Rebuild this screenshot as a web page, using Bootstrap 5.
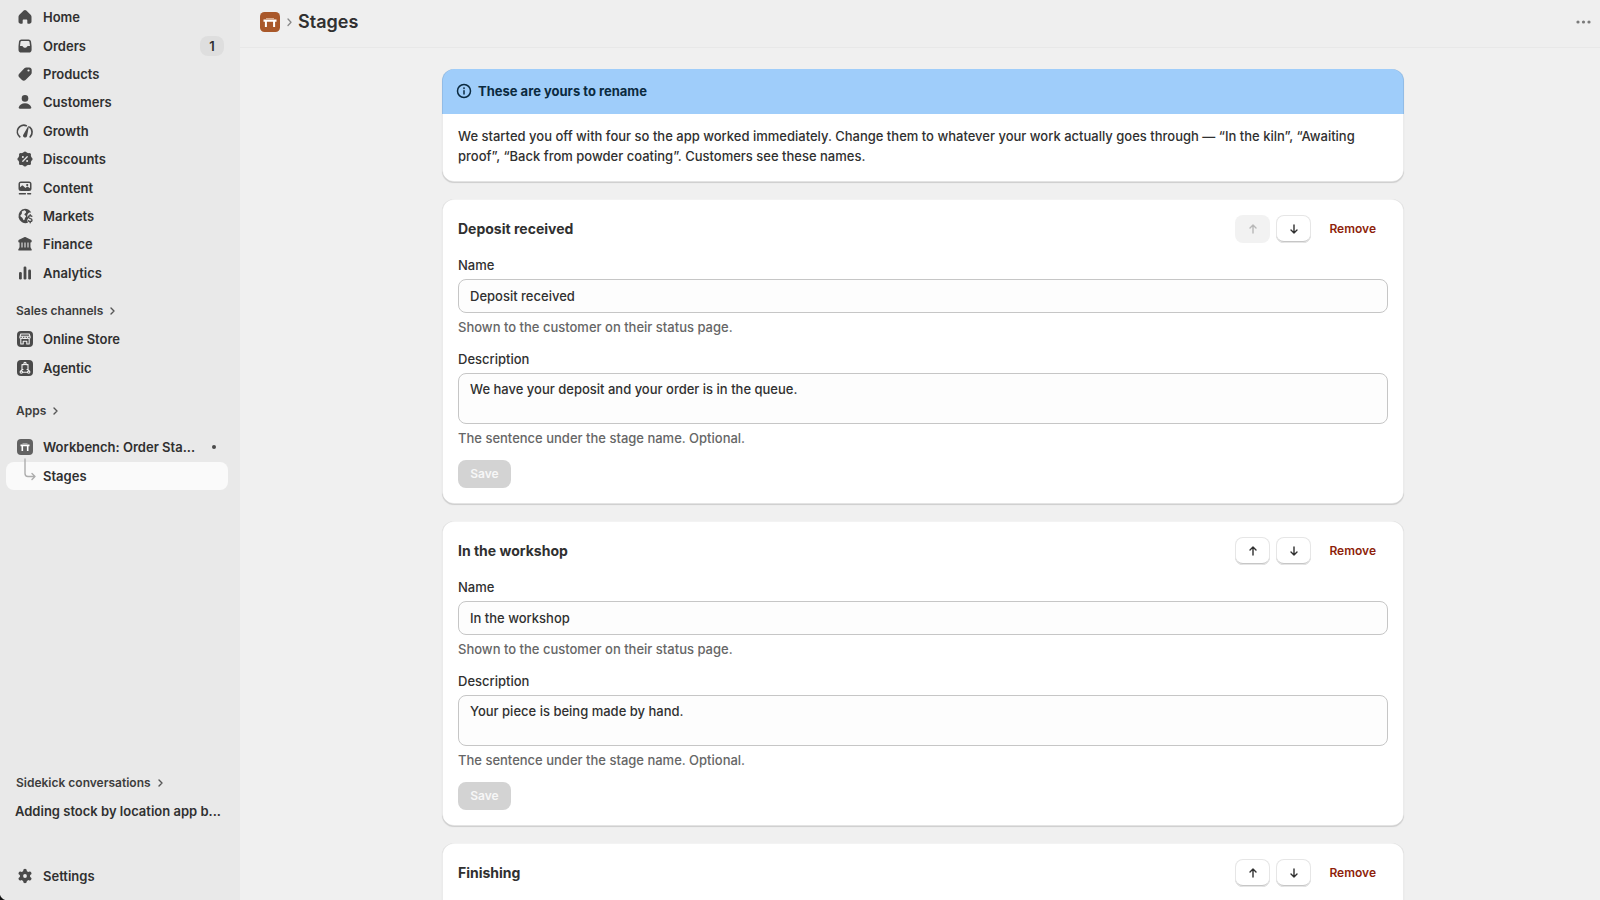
<!DOCTYPE html>
<html lang="en">
<head>
<meta charset="utf-8">
<meta name="viewport" content="width=device-width, initial-scale=1">
<title>Stages</title>
<link href="https://cdn.jsdelivr.net/npm/bootstrap@5.3.0/dist/css/bootstrap.min.css" rel="stylesheet">
<style>
  body { font-family: Inter, "Liberation Sans", sans-serif; font-size: 13px; font-weight: 450; line-height: 20px; color: #303030; background: #f0f0f0; }
  a { color: inherit; text-decoration: none; }
  .app-side { width: 240px; background: #e9e9e9; font-weight: 600; padding: 3px 12px 10px 6px; }
  .side-list { display: grid; grid-auto-rows: 1fr; }
  .side-main { min-height: 284px; }
  .side-pair { min-height: 57px; }
  .side-item { display: flex; align-items: center; gap: 8px; padding: 0 4px 0 9px; min-height: 28px; border-radius: 8px; }
  .side-item svg { width: 20px; height: 20px; flex: none; fill: #4a4a4a; }
  .side-item.current { background: #fafafa; }
  .side-head { display: flex; align-items: center; gap: 6px; padding-left: 10px; min-height: 28px; font-size: 12px; color: #3d3d3d; }
  .side-channels { margin-top: 10px; }
  .side-apps { margin-top: 15px; }
  .side-count { width: 24px; height: 20px; border-radius: 8px; background: #dedede; text-align: center; }
  .side-dot { width: 4px; height: 4px; border-radius: 50%; background: #4a4a4a; margin-right: 8px; }
  .side-branch { overflow: visible; }
  .side-foot { margin-top: 37px; }
  .window-corner { left: 0; bottom: 0; width: 8px; height: 8px; background: radial-gradient(circle at 100% 0, transparent 8px, #111 9px); }
  .app-bar { height: 48px; padding: 0 7px 4px 20px; border-bottom: 1px solid #e8e8e8; background: #efefef; }
  .app-bar h1 { font-size: 18px; line-height: 24px; font-weight: 600; }
  .app-logo { width: 20px; height: 20px; }
  .page-scroll { overflow-y: auto; scrollbar-width: none; padding: 21px 0 16px 6px; }
  .page-scroll::-webkit-scrollbar { display: none; }
  .page-col { max-width: 962px; gap: 17px; }
  .panel { background: #fff; border-radius: 12px; box-shadow: 0 1px 1px #00000026, inset 1px 0 0 #00000014, inset -1px 0 0 #00000014, inset 0 -1px 0 #0000001c, inset 0 1px 0 #0000000c; }
  .notice-head { height: 45px; padding: 0 14px 2px; gap: 6px; background: #9fcdfa; color: #0b2a40; border-radius: 12px 12px 0 0; box-shadow: inset 1px 0 0 #00000014, inset -1px 0 0 #00000014; }
  .notice-head h2 { font-size: 13px; line-height: 20px; font-weight: 700; }
  .notice-text { padding: 12px 16px 16px; }
  .stage { padding: 16px; gap: 12px; }
  .stage h2 { font-size: 14px; line-height: 20px; font-weight: 650; }
  .stage-tools { gap: 6px; }
  .field label { display: block; margin-bottom: 4px; font-weight: 500; }
  .field .form-control { display: block; height: 34px; padding: 6px 11px; font-size: 13px; font-weight: 450; line-height: 20px; color: #303030; background: #fdfdfd; border: 1px solid #c6c6c6; border-radius: 8px; resize: none; }
  .field textarea.form-control { height: 51px; min-height: 51px; padding: 5px 11px; overflow: hidden; }
  .field .help { margin-top: 4px; color: #666; }
  .move { width: 35px; height: 28px; padding: 0; border: 0; border-radius: 8px; background: #fff; box-shadow: inset 0 0 0 1px #e6e6e6, inset 0 -2px 0 #c6c6c6; display: flex; align-items: center; justify-content: center; }
  .move svg { width: 12px; height: 12px; fill: none; stroke: #303030; stroke-width: 1.4; stroke-linecap: round; stroke-linejoin: round; }
  .move:disabled { background: #f2f2f2; box-shadow: none; border: 0; opacity: 1; }
  .move:disabled svg { stroke: #b8b8b8; }
  .remove { height: 28px; padding: 0 12px; border: 0; font-size: 12px; line-height: 20px; font-weight: 600; color: #8e1f0b; }
  .save { width: 53px; height: 28px; padding: 0; border: 0; border-radius: 8px; font-size: 12px; line-height: 20px; font-weight: 600; }
  .save:disabled { background: #d3d3d3; color: #f7f7f7; opacity: 1; }
</style>
</head>
<body>
<svg width="0" height="0" class="position-absolute" aria-hidden="true">
  <symbol id="up" viewBox="0 0 12 12"><path d="M6 10V2M3 5 6 2 9 5"/></symbol>
  <symbol id="down" viewBox="0 0 12 12"><path d="M6 2V10M3 7 6 10 9 7"/></symbol>
  <symbol id="chev" viewBox="0 0 8 12"><path d="M2 3 5 6 2 9" fill="none" stroke="#555" stroke-width="1.400" stroke-linecap="round" stroke-linejoin="round"/></symbol>
</svg>
<div class="d-flex vh-100 overflow-hidden">
  <aside class="app-side d-flex flex-column flex-shrink-0">
    <nav class="side-list side-main" aria-label="Main">
      <a class="side-item" href="#"><svg viewBox="0 0 20 20"><path d="M8.700 3.600a1.900 1.900 0 0 1 2.600 0l4.300 4.100c.6.600.9 1.300.9 2.100v4.700c0 1.300-.9 2.200-2.200 2.200h-1c-.6 0-1-.4-1-1v-2.200c0-.6-.4-1-1-1H8.700c-.6 0-1 .4-1 1v2.200c0 .6-.4 1-1 1h-1c-1.300 0-2.200-.9-2.200-2.200V9.800c0-.8.3-1.500.9-2.100z"/></svg><span>Home</span></a>
      <a class="side-item" href="#"><svg viewBox="0 0 20 20"><path fill-rule="evenodd" d="M6.500 3.500h7c1.300 0 2.200.8 2.500 2l.6 4.500v3.700a2.800 2.800 0 0 1-2.800 2.800H6.300a2.800 2.800 0 0 1-2.800-2.800V10L4 5.500c.3-1.200 1.200-2 2.500-2zM6.600 5c-.6 0-1 .4-1.100 1L5 10h2c.5 0 .9.300 1.100.8.300.7.800 1 1.500 1h.8c.7 0 1.200-.3 1.500-1 .2-.5.600-.8 1.100-.8h2l-.5-4c-.1-.6-.5-1-1.100-1z"/></svg><span>Orders</span><span class="side-count ms-auto">1</span></a>
      <a class="side-item" href="#"><svg viewBox="0 0 20 20"><path fill-rule="evenodd" d="M11.300 3.400h3c1.400 0 2.400 1 2.400 2.400v3c0 .8-.3 1.500-.9 2l-5.300 5.200c-1 1-2.500 1-3.500 0l-2.800-2.800c-1-1-1-2.500 0-3.500L9.400 4.300c.5-.6 1.200-.9 1.900-.9zm2.200 4.200a1.100 1.100 0 1 0 0-2.200 1.100 1.100 0 0 0 0 2.200z"/></svg><span>Products</span></a>
      <a class="side-item" href="#"><svg viewBox="0 0 20 20"><circle cx="10" cy="6.400" r="3.300"/><path d="M3.700 15.500c.6-2.700 3.200-4.300 6.300-4.300s5.700 1.600 6.300 4.300c.2.700-.4 1.200-1.100 1.200H4.800c-.7 0-1.300-.5-1.100-1.200z"/></svg><span>Customers</span></a>
      <a class="side-item" href="#"><svg viewBox="0 0 20 20"><path d="M4.800 15.800A6.500 6.500 0 0 1 11.300 4.700M14.700 6.200a6.500 6.500 0 0 1 .5 9.600" fill="none" stroke="#4a4a4a" stroke-width="1.700" stroke-linecap="round"/><path d="M8 14.200 13 5.400c.3-.5.900-.3.8.3L12 15.300a2.100 2.100 0 0 1-4-1.100z"/></svg><span>Growth</span></a>
      <a class="side-item" href="#"><svg viewBox="0 0 20 20"><path d="M10 3.700 14.500 5.500 16.300 10 14.500 14.500 10 16.300 5.500 14.500 3.700 10 5.500 5.500z" stroke="#4a4a4a" stroke-width="1.600" stroke-linejoin="round"/><g><circle cx="10" cy="4" r="1.600"/><circle cx="10" cy="16" r="1.600"/><circle cx="4" cy="10" r="1.600"/><circle cx="16" cy="10" r="1.600"/><circle cx="5.600" cy="5.600" r="1.600"/><circle cx="14.400" cy="5.600" r="1.600"/><circle cx="5.600" cy="14.400" r="1.600"/><circle cx="14.400" cy="14.400" r="1.600"/></g><path d="m7.800 12.200 4.400-4.400" stroke="#e9e9e9" stroke-width="1.300" stroke-linecap="round"/><circle cx="7.900" cy="8" r="1" fill="#e9e9e9"/><circle cx="12.100" cy="12" r="1" fill="#e9e9e9"/></svg><span>Discounts</span></a>
      <a class="side-item" href="#"><svg viewBox="0 0 20 20"><path fill-rule="evenodd" d="M6 3.500h8A2.500 2.500 0 0 1 16.500 6v4.500A2.500 2.500 0 0 1 14 13H6a2.500 2.500 0 0 1-2.500-2.500V6A2.500 2.500 0 0 1 6 3.500zM6 5c-.6 0-1 .4-1 1v3.300l1.500-1.400c.6-.5 1.300-.5 1.800 0l2.200 2 1.100-.9c.5-.4 1.100-.4 1.600 0l1.800 1.300V6c0-.6-.4-1-1-1zm6.200 3.200a1.100 1.100 0 1 0 0-2.200 1.100 1.100 0 0 0 0 2.200z"/><path d="M4.400 15.800h6M12.700 15.800h2.900" stroke="#4a4a4a" stroke-width="1.400" stroke-linecap="round"/></svg><span>Content</span></a>
      <a class="side-item" href="#"><svg viewBox="0 0 20 20"><path fill-rule="evenodd" d="M10 2.800c2.700 0 5 1.500 6.200 3.700-1.500-.4-3 .3-3.600 1.700-.6 1.200-.3 2.600.7 3.500l-.5 1.600c-.7.500-.8 1.800-.1 2.400l.2 1.100A7.200 7.200 0 1 1 10 2.800zM9.800 4.300c-1 .1-2.200.6-3 1.200.1 1.200.3 1.700-.2 2.600-.4.700-1.300 1-1.200 2 .1 1 1.200 1.100 2 1.800.8.700.7 2.300 1.600 2.300.9-.1.600-1.900 1.300-2.700.4-.5.900-.8.700-1.500-.2-.8-1.500-.7-1.600-1.600-.1-.8 1.300-1 1.700-1.900.3-.8-.7-1.500-1.300-2.200z"/><path d="M16.800 10.300c-.6-.6-1.300-.7-2-.6-1.700.2-1.700 2.300 0 2.700l.7.200c2 .4 1.900 2.700.1 2.900-.9.100-1.700-.2-2.200-.8M15.200 8.700v1M15.200 15.500v1.200" fill="none" stroke="#4a4a4a" stroke-width="1.400" stroke-linecap="round"/></svg><span>Markets</span></a>
      <a class="side-item" href="#"><svg viewBox="0 0 20 20"><path d="M9.200 3.300c.5-.3 1.100-.3 1.600 0L16 5.700c.5.300.7.700.7 1.200v.7c0 .5-.4.900-.9.900H4.200c-.5 0-.9-.4-.9-.9v-.7c0-.5.3-1 .7-1.200z"/><path d="M5.500 8v6M8.500 8v6M11.500 8v6M14.500 8v6" stroke="#4a4a4a" stroke-width="1.900"/><path d="M4.500 13.500h11l1.100 1.700c.4.700 0 1.400-.7 1.400H4.100c-.7 0-1.100-.7-.7-1.400z"/></svg><span>Finance</span></a>
      <a class="side-item" href="#"><svg viewBox="0 0 20 20"><rect x="4" y="9" width="2.800" height="7.500" rx="1.300"/><rect x="8.600" y="3.500" width="2.800" height="13" rx="1.300"/><rect x="13.200" y="6.500" width="2.800" height="10" rx="1.300"/></svg><span>Analytics</span></a>
    </nav>
    <a class="side-head side-channels" href="#">Sales channels<svg width="8" height="12"><use href="#chev"/></svg></a>
    <nav class="side-list side-pair" aria-label="Sales channels">
      <a class="side-item" href="#"><svg viewBox="0 0 20 20"><rect x="2" y="2" width="16" height="16" rx="4"/><g fill="none" stroke="#f1f1f1" stroke-width="1.100" stroke-linejoin="round"><path d="M5.800 5h8.400l1 3.200c0 1.700-2.400 1.700-2.600.2-.2 1.500-2.500 1.500-2.600 0-.1 1.500-2.400 1.500-2.600 0-.2 1.500-2.600 1.500-2.600-.2zM5.300 7.300h9.400M5.800 10v5h2.400v-2.700h3.600V15h2.400v-5"/></g></svg><span>Online Store</span></a>
      <a class="side-item" href="#"><svg viewBox="0 0 20 20"><rect x="2" y="2" width="16" height="16" rx="4"/><g fill="none" stroke="#f1f1f1" stroke-width="1.100" stroke-linecap="round" stroke-linejoin="round"><path d="M8.800 6.600H7v4.900l-1 1.600M11.200 6.600H13v4.900l1 1.600M7.600 14.300h4.800M7 11.500h1M13 11.500h-1"/><circle cx="10" cy="5.500" r="1.100"/><circle cx="6.300" cy="14.100" r="1.200"/><circle cx="13.700" cy="14.100" r="1.200"/></g></svg><span>Agentic</span></a>
    </nav>
    <a class="side-head side-apps" href="#">Apps<svg width="8" height="12"><use href="#chev"/></svg></a>
    <nav class="side-list side-pair mt-2" aria-label="Apps">
      <a class="side-item" href="#"><svg viewBox="0 0 20 20"><rect x="2" y="2" width="16" height="16" rx="4" fill="#616161"/><path d="M5.500 7.500h9v1.800h-9zM6.500 9.300h1.600V14H6.500zM11.900 9.300h1.600V14h-1.600z" fill="#fff"/><path d="M7.500 6.300h5v1.200h-5z" fill="#bbb"/></svg><span class="text-nowrap">Workbench: Order Sta...</span><span class="side-dot ms-auto"></span></a>
      <a class="side-item current" href="#" aria-current="page"><svg class="side-branch" viewBox="0 0 20 20"><path d="M10-7V7.500A3 3 0 0 0 13 10.500H20M17 7.500l3 3-3 3" fill="none" stroke="#adadad" stroke-width="1.400" stroke-linecap="round" stroke-linejoin="round"/></svg><span>Stages</span></a>
    </nav>
    <div class="mt-auto">
      <a class="side-head" href="#">Sidekick conversations<svg width="8" height="12"><use href="#chev"/></svg></a>
      <a class="side-item text-nowrap" href="#">Adding stock by location app b...</a>
    </div>
    <a class="side-item side-foot flex-shrink-0" href="#"><svg viewBox="0 0 20 20"><g stroke="#4a4a4a" stroke-width="3.600" stroke-linecap="round"><path d="M10 4.600v10.800M5.300 7.300l9.400 5.400M14.700 7.300 5.300 12.700"/></g><circle cx="10" cy="10" r="5.200"/><circle cx="10" cy="10" r="1.900" fill="#e9e9e9"/></svg><span>Settings</span></a>
  </aside>

  <div class="d-flex flex-column flex-grow-1 overflow-hidden">
    <header class="app-bar d-flex align-items-center flex-shrink-0">
      <svg class="app-logo" viewBox="0 0 20 20"><rect width="20" height="20" rx="4.500" fill="#a9582a"/><path d="M3.500 7.500h13v2.300h-13zM4.900 9.800h2V15h-2zM13.100 9.800h2V15h-2z" fill="#fff"/><path d="M6 6h8v1.500H6z" fill="#d9ab8d"/></svg>
      <svg class="mx-1" width="10" height="12" viewBox="0 0 10 12"><path d="M4 3l3 3.200L4 9.500" fill="none" stroke="#8a8a8a" stroke-width="1.300" stroke-linecap="round" stroke-linejoin="round"/></svg>
      <h1 class="m-0">Stages</h1>
      <button type="button" class="btn p-0 border-0 ms-auto d-flex" aria-label="More actions"><svg width="18" height="20" viewBox="0 0 18 20" fill="#7a7a7a"><circle cx="3" cy="10" r="1.600"/><circle cx="8.500" cy="10" r="1.600"/><circle cx="14" cy="10" r="1.600"/></svg></button>
    </header>
    <main class="page-scroll flex-grow-1">
      <div class="page-col d-flex flex-column mx-auto">
        <section class="panel">
          <div class="notice-head d-flex align-items-center"><svg width="16" height="16" viewBox="0 0 16 16" fill="none" stroke="#0b2a40" stroke-width="1.500" stroke-linecap="round"><circle cx="8" cy="8" r="6.500"/><path d="M8 7.700v3.200"/><circle cx="8" cy="5.200" r=".3"/></svg><h2 class="m-0">These are yours to rename</h2></div>
          <p class="notice-text m-0">We started you off with four so the app worked immediately. Change them to whatever your work actually goes through — “In the kiln”, “Awaiting proof”, “Back from powder coating”. Customers see these names.</p>
        </section>

        <form class="panel stage d-flex flex-column">
          <div class="d-flex align-items-center">
            <h2 class="m-0 me-auto">Deposit received</h2>
            <div class="stage-tools d-flex">
              <button type="button" class="move" disabled aria-label="Move up"><svg><use href="#up"/></svg></button>
              <button type="button" class="move" aria-label="Move down"><svg><use href="#down"/></svg></button>
              <button type="button" class="btn remove">Remove</button>
            </div>
          </div>
          <div class="field"><label for="name1">Name</label><input id="name1" class="form-control" type="text" value="Deposit received"><div class="help">Shown to the customer on their status page.</div></div>
          <div class="field"><label for="desc1">Description</label><textarea id="desc1" class="form-control">We have your deposit and your order is in the queue.</textarea><div class="help">The sentence under the stage name. Optional.</div></div>
          <button type="submit" class="btn save" disabled>Save</button>
        </form>

        <form class="panel stage d-flex flex-column">
          <div class="d-flex align-items-center">
            <h2 class="m-0 me-auto">In the workshop</h2>
            <div class="stage-tools d-flex">
              <button type="button" class="move" aria-label="Move up"><svg><use href="#up"/></svg></button>
              <button type="button" class="move" aria-label="Move down"><svg><use href="#down"/></svg></button>
              <button type="button" class="btn remove">Remove</button>
            </div>
          </div>
          <div class="field"><label for="name2">Name</label><input id="name2" class="form-control" type="text" value="In the workshop"><div class="help">Shown to the customer on their status page.</div></div>
          <div class="field"><label for="desc2">Description</label><textarea id="desc2" class="form-control">Your piece is being made by hand.</textarea><div class="help">The sentence under the stage name. Optional.</div></div>
          <button type="submit" class="btn save" disabled>Save</button>
        </form>

        <form class="panel stage d-flex flex-column pb-5">
          <div class="d-flex align-items-center">
            <h2 class="m-0 me-auto">Finishing</h2>
            <div class="stage-tools d-flex">
              <button type="button" class="move" aria-label="Move up"><svg><use href="#up"/></svg></button>
              <button type="button" class="move" aria-label="Move down"><svg><use href="#down"/></svg></button>
              <button type="button" class="btn remove">Remove</button>
            </div>
          </div>
        </form>
      </div>
    </main>
  </div>
</div>
<div class="window-corner position-fixed"></div>
<script src="https://cdn.jsdelivr.net/npm/bootstrap@5.3.0/dist/js/bootstrap.bundle.min.js"></script>
</body>
</html>
